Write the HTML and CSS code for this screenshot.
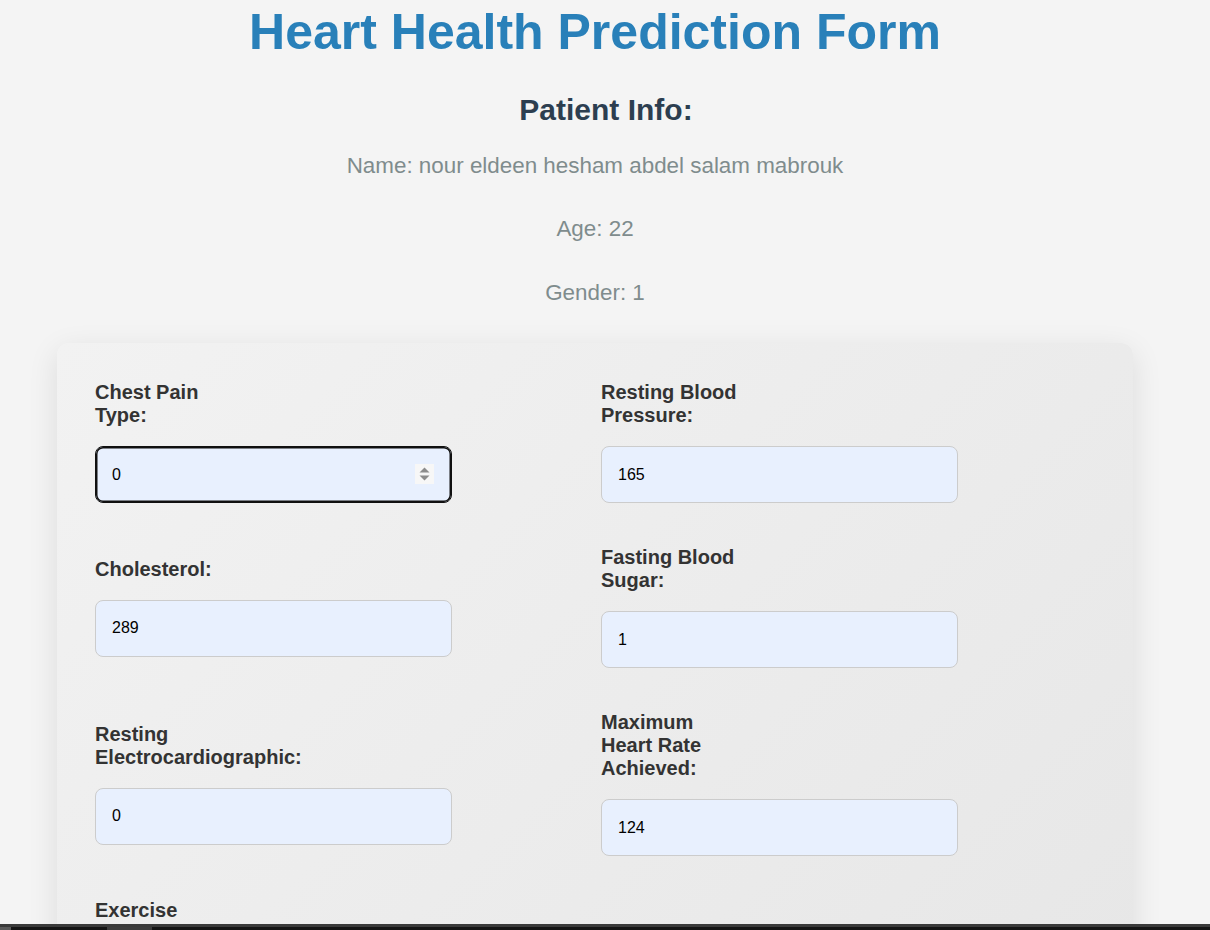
FILE: index.html
```html
<!DOCTYPE html>
<html lang="en">
<head>
<meta charset="utf-8">
<title>Heart Health Prediction Form</title>
<link rel="stylesheet" href="styles.css">
</head>
<body>
<main class="page">
  <h1 class="title">Heart Health Prediction Form</h1>
  <h2 class="patient-heading">Patient Info:</h2>
  <p class="patient-line">Name: nour eldeen hesham abdel salam mabrouk</p>
  <p class="patient-line">Age: 22</p>
  <p class="patient-line last">Gender: 1</p>

  <form class="card">
    <div class="form-group">
      <label class="field-label" for="cp">Chest Pain Type:</label>
      <div class="input-wrap">
        <input class="field-input focused" id="cp" type="text" value="0">
        <span class="spinner">
          <svg width="19" height="20" viewBox="0 0 19 20"><rect width="19" height="20" fill="#f7f7f7"/><path d="M4.5 8.5 L9.5 3.5 L14.5 8.5 Z" fill="#8c8c8c"/><path d="M4.5 11.5 L9.5 16.5 L14.5 11.5 Z" fill="#8c8c8c"/></svg>
        </span>
      </div>
    </div>
    <div class="form-group">
      <label class="field-label" for="bp">Resting Blood Pressure:</label>
      <input class="field-input" id="bp" type="text" value="165">
    </div>
    <div class="form-group">
      <label class="field-label" for="chol">Cholesterol:</label>
      <input class="field-input" id="chol" type="text" value="289">
    </div>
    <div class="form-group">
      <label class="field-label" for="fbs">Fasting Blood Sugar:</label>
      <input class="field-input" id="fbs" type="text" value="1">
    </div>
    <div class="form-group">
      <label class="field-label" for="ecg">Resting Electrocardiographic:</label>
      <input class="field-input" id="ecg" type="text" value="0">
    </div>
    <div class="form-group">
      <label class="field-label" for="hr">Maximum Heart Rate Achieved:</label>
      <input class="field-input" id="hr" type="text" value="124">
    </div>
    <div class="form-group">
      <label class="field-label" for="ex">Exercise Induced Angina:</label>
      <input class="field-input" id="ex" type="text" value="0">
    </div>
    <div class="form-group">
      <label class="field-label" for="op">Oldpeak:</label>
      <input class="field-input" id="op" type="text" value="2">
    </div>
  </form>
</main>
<div class="window-edge">
  <div class="edge-top"></div>
  <div class="edge-bottom">
    <span class="seg seg-a"></span>
    <span class="seg seg-b"></span>
    <span class="seg seg-c"></span>
    <span class="seg seg-d"></span>
  </div>
</div>
</body>
</html>
```
FILE: styles.css
```css
html {
  overflow: hidden;
}
body {
  margin: 0;
  background: #f4f4f4;
  font-family: "Liberation Sans", Arial, sans-serif;
}
.page {
  padding-right: 20px;
  text-align: center;
}
.title {
  margin: 3px 0 0;
  font-size: 50px;
  font-weight: bold;
  color: #2980b9;
  line-height: normal;
}
.patient-heading {
  margin: 32px 0 0;
  padding-left: 22px;
  font-size: 30px;
  font-weight: bold;
  color: #2c3e50;
  line-height: normal;
}
.patient-line {
  margin: 26px 0 0;
  font-size: 22.4px;
  color: #7f8c8d;
  line-height: normal;
}
.patient-line + .patient-line {
  margin-top: 37px;
}
.patient-line.last {
  margin-top: 38px;
  margin-bottom: 37px;
}
.card {
  margin: 0 57px;
  padding: 38px;
  border-radius: 12px;
  background: linear-gradient(135deg, #f2f2f2 0%, #e6e6e6 100%);
  box-shadow: 0 8px 30px rgba(0, 0, 0, 0.1);
  display: grid;
  grid-template-columns: 1fr 1fr;
  column-gap: 12px;
  row-gap: 43px;
  align-items: center;
  text-align: left;
  min-height: 700px;
  align-content: start;
}
.form-group {
  display: flex;
  flex-direction: column;
  align-items: flex-start;
}
.field-label {
  display: block;
  max-width: 145px;
  font-size: 20px;
  font-weight: bold;
  line-height: 23px;
  color: #333333;
  margin-bottom: 19px;
}
.input-wrap {
  position: relative;
}
.field-input {
  box-sizing: border-box;
  width: 357px;
  height: 57px;
  padding: 0 16px;
  border: 1px solid #cccccc;
  border-radius: 8px;
  background: #e8f0fe;
  font-family: "Liberation Sans", Arial, sans-serif;
  font-size: 16px;
  color: #000000;
  outline: none;
}
.field-input.focused {
  border: 1px solid #101010;
  box-shadow: inset 0 0 0 1.5px #101010;
}
.spinner {
  position: absolute;
  right: 18px;
  top: 18px;
  width: 19px;
  height: 20px;
  display: block;
}
.spinner svg {
  display: block;
}
.window-edge {
  position: fixed;
  left: 0;
  right: 0;
  bottom: 0;
  height: 6px;
  display: flex;
  flex-direction: column;
}
.edge-top {
  height: 3px;
  background: #3a3a3a;
}
.edge-bottom {
  height: 3px;
  display: flex;
  background: #151515;
}
.seg {
  display: block;
  height: 3px;
}
.seg-a {
  width: 11px;
  background: #5a5a5a;
}
.seg-b {
  width: 96px;
  background: #151515;
}
.seg-c {
  width: 45px;
  background: #3c3c3c;
}
.seg-d {
  flex: 1;
  background: #151515;
}
```
